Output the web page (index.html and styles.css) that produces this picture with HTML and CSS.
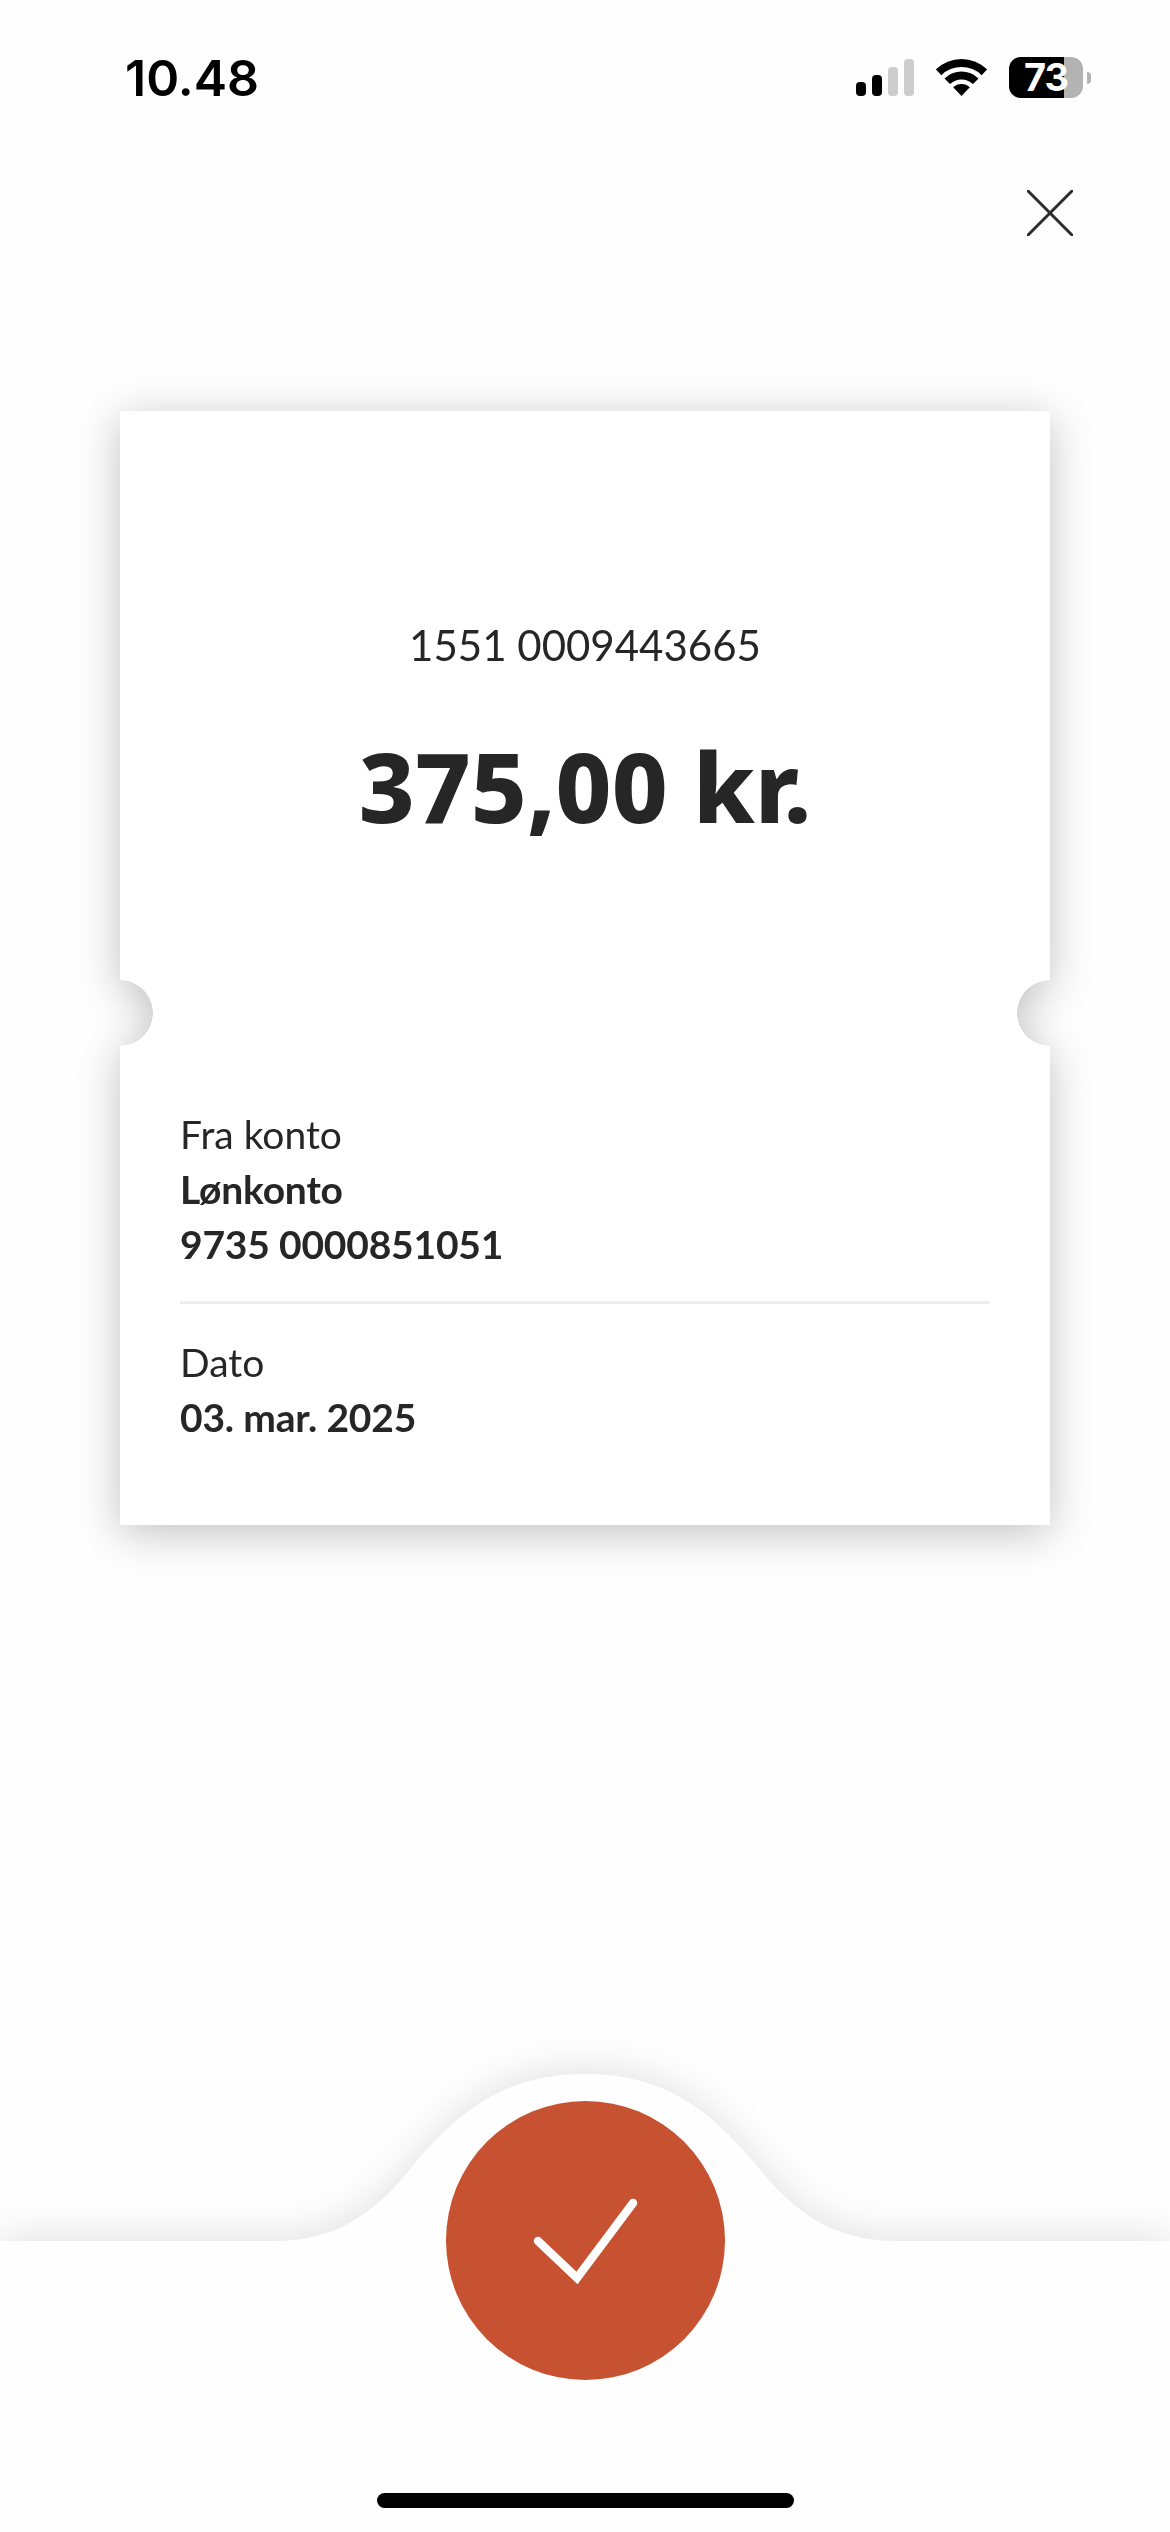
FILE: index.html
```html
<!DOCTYPE html>
<html lang="da">
<head>
  <meta charset="UTF-8">
  <meta name="viewport" content="width=device-width, initial-scale=1.0">
  <title>Kvittering</title>
  <link rel="stylesheet" href="styles.css">
</head>
<body>
  <header class="status-bar">
    <span class="time">10.48</span>
    <div class="status-icons">
      <div class="signal">
        <span class="bar bar-1"></span>
        <span class="bar bar-2"></span>
        <span class="bar bar-3 off"></span>
        <span class="bar bar-4 off"></span>
      </div>
      <svg class="wifi" width="51" height="37" viewBox="0 0 51 37">
        <path d="M-.2 10.4A37 37 0 0 1 51.2 10.4L45.65 16.15A29 29 0 0 0 5.35 16.15Z"/>
        <path d="M8.5 19.4A24.5 24.5 0 0 1 42.5 19.4L37 25.1A16.5 16.5 0 0 0 14 25.1Z"/>
        <path d="M17.16 28.37A12 12 0 0 1 33.84 28.37L25.5 37Z"/>
      </svg>
      <div class="battery">
        <div class="battery-body">
          <span class="battery-level"></span>
          <span class="battery-text">73</span>
        </div>
        <span class="battery-nub"></span>
      </div>
    </div>
  </header>

  <div class="close-row">
    <svg class="close" width="46" height="46" viewBox="0 0 46 46">
      <path d="M1 1L45 45M45 1L1 45"/>
    </svg>
  </div>

  <main class="ticket-wrap">
    <section class="ticket">
      <div class="ticket-top">
        <p class="account-no">1551 0009443665</p>
        <p class="amount">375,00 kr.</p>
      </div>
      <div class="ticket-bottom">
        <div class="info-block">
          <p class="label">Fra konto</p>
          <p class="value">Lønkonto</p>
          <p class="value">9735 0000851051</p>
        </div>
        <div class="info-block second">
          <p class="label">Dato</p>
          <p class="value">03. mar. 2025</p>
        </div>
      </div>
    </section>
  </main>

  <footer class="sheet">
    <!-- hump behind the confirm button, runs on down to the page bottom -->
    <svg class="hump" width="1170" height="480" viewBox="0 0 1170 480">
      <path d="M-40 167H274C340 167 378 135 412 93C462 32 510 0 585 0C660 0 708 32 758 93C792 135 830 167 896 167H1210V520H-40Z"/>
    </svg>
    <button class="confirm">
      <svg width="279" height="279" viewBox="0 0 279 279">
        <path d="M92 140L131 177L187 102"/>
      </svg>
    </button>
    <div class="home-indicator"></div>
  </footer>
</body>
</html>
```

FILE: styles.css
```css
* {
  box-sizing: border-box;
}
html, body {
  margin: 0;
  padding: 0;
}
body {
  width: 1170px;
  height: 2532px;
  background-color: #fefefe;
  color: #262626;
  font-family: Lato, sans-serif;
  overflow: hidden;
  display: flex;
  flex-direction: column;
}
p {
  margin: 0;
}

/* status bar */
.status-bar {
  height: 155px;
  padding: 50px 79px 0 125px;
  display: flex;
  justify-content: space-between;
  align-items: flex-start;
  color: #000;
}
.time {
  font-family: Inter, sans-serif;
  font-size: 50px;
  font-weight: 600;
  line-height: 56px;
}
.status-icons {
  display: flex;
  align-items: flex-start;
  padding-top: 7px;
}
.signal {
  display: flex;
  align-items: flex-end;
  gap: 6px;
  height: 37px;
  margin-top: 2px;
}
.bar {
  width: 10px;
  border-radius: 4px;
  background-color: #000;
}
.bar.off {
  background-color: #cdcdcd;
}
.bar-1 { height: 14px; }
.bar-2 { height: 21px; }
.bar-3 { height: 29px; }
.bar-4 { height: 37px; }
.wifi {
  margin: 2px 22px 0 22px;
  fill: #000;
}
.battery {
  display: flex;
  align-items: center;
}
.battery-body {
  position: relative;
  width: 74px;
  height: 41px;
  border-radius: 12px;
  background-color: #b3b3b3;
  display: flex;
  align-items: center;
  justify-content: center;
}
.battery-level {
  position: absolute;
  left: 0;
  top: 0;
  bottom: 0;
  width: 55px;
  border-radius: 12px 0 0 12px;
  background-color: #000;
}
.battery-text {
  position: relative;
  font-family: Inter, sans-serif;
  font-size: 38px;
  font-weight: 700;
  color: #fff;
  line-height: 41px;
  letter-spacing: -1px;
}
.battery-nub {
  width: 4px;
  height: 12px;
  margin-left: 4px;
  border-radius: 0 6px 6px 0;
  background-color: #b3b3b3;
}

/* close */
.close-row {
  height: 256px;
  padding: 35px 97px 0 0;
  display: flex;
  justify-content: flex-end;
  align-items: flex-start;
}
.close path {
  fill: none;
  stroke: #2d2d2d;
  stroke-width: 3;
  stroke-linecap: round;
}

/* ticket */
.ticket-wrap {
  padding: 0 120px;
  filter: drop-shadow(0 8px 22px rgba(0, 0, 0, 0.24));
}
.ticket {
  height: 1114px;
  background-color: #fff;
  -webkit-mask:
    radial-gradient(circle 33px at 0 602px, transparent 32.5px, #000 33px) left / 50.1% 100% no-repeat,
    radial-gradient(circle 33px at 100% 602px, transparent 32.5px, #000 33px) right / 50.1% 100% no-repeat;
  mask:
    radial-gradient(circle 33px at 0 602px, transparent 32.5px, #000 33px) left / 50.1% 100% no-repeat,
    radial-gradient(circle 33px at 100% 602px, transparent 32.5px, #000 33px) right / 50.1% 100% no-repeat;
}
.ticket-top {
  height: 602px;
  padding-top: 205px;
  text-align: center;
}
.account-no {
  font-size: 42px;
  line-height: 58px;
}
.amount {
  margin-top: 46px;
  font-family: "Noto Sans", sans-serif;
  font-size: 97px;
  font-weight: 800;
  line-height: 130px;
}
.ticket-bottom {
  padding: 94px 60px 0;
}
.info-block {
  padding-bottom: 29px;
  border-bottom: 3px solid #eeeeee;
}
.info-block.second {
  padding-top: 31px;
  border-bottom: none;
}
.label {
  font-size: 39px;
  line-height: 55px;
}
.value {
  font-size: 39px;
  font-weight: 700;
  line-height: 55px;
  letter-spacing: -0.2px;
}

/* bottom sheet */
.sheet {
  position: relative;
  flex: 1;
  margin-top: 716px;
}
.hump {
  position: absolute;
  left: 0;
  top: -167px;
  fill: #fefefe;
  filter: drop-shadow(0 -6px 18px rgba(0, 0, 0, 0.1));
}
.confirm {
  position: absolute;
  left: 446px;
  top: -140px;
  width: 279px;
  height: 279px;
  padding: 0;
  border: none;
  border-radius: 50%;
  background-color: #c75232;
}
.confirm svg {
  display: block;
}
.confirm path {
  fill: none;
  stroke: #fff;
  stroke-width: 8.5;
  stroke-linecap: round;
}
.home-indicator {
  position: absolute;
  left: 377px;
  top: 252px;
  width: 417px;
  height: 15px;
  border-radius: 8px;
  background-color: #000;
}
```
